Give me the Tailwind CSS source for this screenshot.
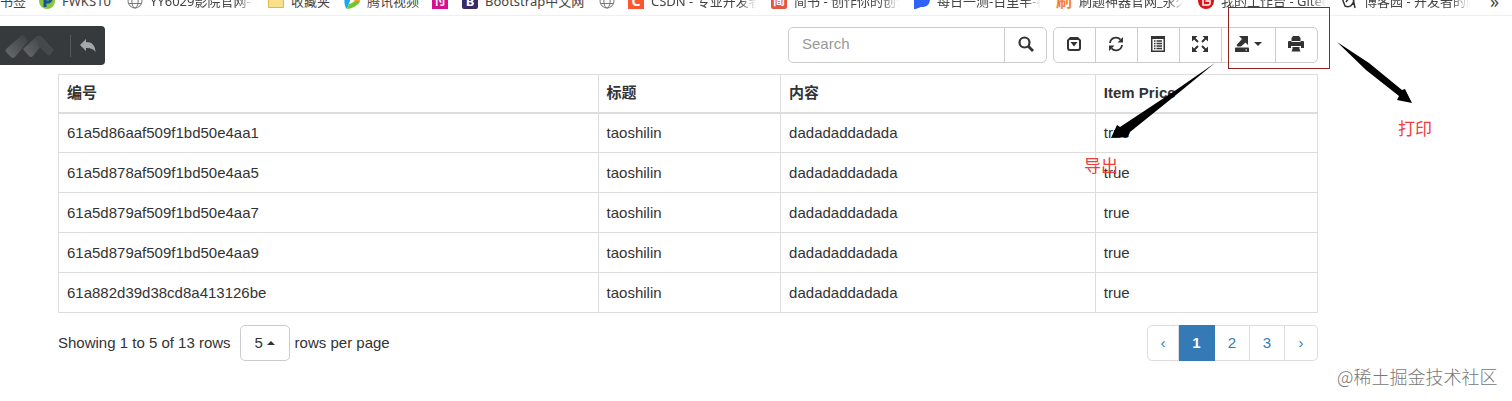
<!DOCTYPE html>
<html lang="zh-CN">
  <head>
    <meta charset="utf-8" />
    <title>Bootstrap Table</title>
    <script src="https://cdn.jsdelivr.net/npm/@tailwindcss/browser@4"></script>
  </head>
  <body class="relative min-h-screen bg-white font-['Liberation_Sans','Noto_Sans_CJK_SC',sans-serif] text-[15px] leading-5 text-[#333]">
    <!-- bookmarks bar -->
    <nav class="flex h-4 items-end overflow-hidden border-b border-[#f0f0f0] pb-1 font-['Noto_Sans','Noto_Sans_CJK_SC',sans-serif] text-[13px] text-[#444]">
      <ul class="flex h-5 w-full items-center gap-[15px] whitespace-nowrap">
        <li class="w-6 shrink-0">书签</li>
        <li>
          <a href="#" class="flex w-[73px] items-center gap-[7px]">
            <svg class="size-4 shrink-0" viewBox="0 0 16 16"><circle cx="8" cy="8" r="8" fill="#8cc63f" /><path d="M6 14V3h3a3 3 0 0 1 0 6H6" fill="none" stroke="#17559b" stroke-width="3" /></svg>
            FWKS10
          </a>
        </li>
        <li>
          <a href="#" class="flex items-center gap-[7px]">
            <svg class="size-4 shrink-0" viewBox="0 0 16 16" fill="none" stroke="#777"><circle cx="8" cy="8" r="7" /><ellipse cx="8" cy="8" rx="3.2" ry="7" /><path d="M1.5 5.5h13M1.5 10.5h13" /></svg>
            <span class="w-[103px] overflow-hidden mask-r-from-85%">YY6029影院官网-手机</span>
          </a>
        </li>
        <li>
          <a href="#" class="flex items-center gap-[7px]">
            <svg class="size-4 shrink-0" viewBox="0 0 16 16"><path d="M.5 2.5h6l1.500 2h7.500v10H.5z" fill="#fbe08c" stroke="#dfb64c" /></svg>
            <span class="w-[38px]">收藏夹</span>
          </a>
        </li>
        <li>
          <a href="#" class="flex items-center gap-[7px]">
            <svg class="size-4 shrink-0" viewBox="0 0 16 16"><path d="M1 2l6 3-4 11C0 14 0 6 1 2z" fill="#17a8f0" /><path d="M1 2C5 0 16 5 16 8L9 8z" fill="#ff9b20" /><path d="M16 8c0 3-8 8-13 8l2-5 5-3z" fill="#72c62b" /><path d="M6 5.500l5 2.500-5 3z" fill="#fff" /></svg>
            <span class="w-[50px]">腾讯视频</span>
          </a>
        </li>
        <li><a href="#" class="flex size-4 items-center justify-center bg-[#d6118c] text-xs font-bold text-white">付</a></li>
        <li class="-ml-px">
          <a href="#" class="flex items-center gap-[7px]">
            <span class="flex size-4 shrink-0 items-center justify-center rounded-xs bg-[#3c2a66] font-bold text-white">B</span>
            <span class="w-[99px]">Bootstrap中文网</span>
          </a>
        </li>
        <li>
          <a href="#" aria-label="link">
            <svg class="size-4" viewBox="0 0 16 16" fill="none" stroke="#777"><circle cx="8" cy="8" r="7" /><ellipse cx="8" cy="8" rx="3.2" ry="7" /><path d="M1.500 5.500h13M1.500 10.500h13" /></svg>
          </a>
        </li>
        <li class="-ml-0.5">
          <a href="#" class="flex items-center gap-[7px]">
            <span class="flex size-4 shrink-0 items-center justify-center bg-[#fc5531] text-sm font-bold text-white">C</span>
            <span class="w-[105px] overflow-hidden mask-r-from-85%">CSDN - 专业开发者</span>
          </a>
        </li>
        <li>
          <a href="#" class="flex items-center gap-[7px]">
            <span class="flex size-4 shrink-0 items-center justify-center rounded-xs bg-[#e4573f] text-xs font-bold text-white">简</span>
            <span class="w-[105px] overflow-hidden mask-r-from-85%">简书 - 创作你的创作</span>
          </a>
        </li>
        <li>
          <a href="#" class="flex items-center gap-[7px]">
            <svg class="size-4 shrink-0" viewBox="0 0 16 16"><path d="M0 16V6a6 6 0 0 1 6-6h4a6 6 0 0 1 6 6c0 5-3 8-8 8-3 0-4 2-8 2z" fill="#2f62f5" /></svg>
            <span class="w-[104px] overflow-hidden mask-r-from-85%">每日一测-百里半-在线</span>
          </a>
        </li>
        <li>
          <a href="#" class="flex items-center gap-[7px]">
            <span class="flex size-4 shrink-0 items-center justify-center text-base font-bold text-[#f58232]">刷</span>
            <span class="w-[104px] overflow-hidden mask-r-from-85%">刷题神器官网_永久</span>
          </a>
        </li>
        <li>
          <a href="#" class="flex items-center gap-[7px]">
            <svg class="size-4 shrink-0" viewBox="0 0 16 16"><circle cx="8" cy="8" r="8" fill="#d8141c" /><path d="M12 4H7a2 2 0 0 0-2 2v6h5a2 2 0 0 0 2-2V8H7.500" fill="none" stroke="#fff" stroke-width="1.500" /></svg>
            <span class="w-[105px] overflow-hidden mask-r-from-85%">我的工作台 - Gitee.com</span>
          </a>
        </li>
        <li>
          <a href="#" class="flex items-center gap-[7px]">
            <svg class="size-4 shrink-0" viewBox="0 0 16 16" fill="none" stroke="#333" stroke-width="1.500"><path d="M1 5l3 8c5 2 8-1 9-6M5 9c3-5 7-4 7-4l2 10" /></svg>
            <span class="w-[105px] overflow-hidden mask-r-from-85%">博客园 - 开发者的网</span>
          </a>
        </li>
        <li class="pl-1.5 text-lg">»</li>
      </ul>
    </nav>

    <!-- floating capture widget -->
    <div class="absolute top-[26px] left-0 flex h-[39px] w-[105px] items-center rounded-r-[4px] bg-[#363a3d]">
      <svg class="h-[26px] w-[54px] shrink-0" viewBox="0 0 54 26">
        <defs>
          <linearGradient id="fade" x1="0" y1="1" x2="1" y2="0"><stop stop-color="#686a6f" /><stop offset="1" stop-color="#3b3f42" /></linearGradient>
        </defs>
        <path d="M6 16L21 3q2-2 4 0l3 5-13 16q-2 2-4 0l-5-5q-1-1 0-3z" fill="url(#fade)" />
        <path d="M23 16L37 3l7 6-11 14q-2 2-4 0z" fill="url(#fade)" />
        <path d="M37 3h4l13 14-5 6-10-9z" fill="#46494c" />
      </svg>
      <button type="button" aria-label="back" class="ml-4 flex h-[22px] items-center border-l border-[#55595c] pl-2">
        <svg class="h-4 w-[18px]" viewBox="0 0 18 16" fill="#a5a8aa"><path d="M7 1v3c6 0 9 3 9.500 10-2-3-4.500-4-9.500-4v3L1 7z" /></svg>
      </button>
    </div>

    <main class="ml-[58px] w-5/6">
      <div class="flex justify-end gap-1.5 pt-[11px] pb-[11px]">
        <form class="flex h-9">
          <input type="text" aria-label="Search" placeholder="Search" class="w-[217px] rounded-l-[5px] border border-[#ccc] px-[13px] pb-0.5 placeholder:text-[#999]" />
          <button type="button" aria-label="search" class="-ml-px flex w-[43px] items-center justify-center rounded-r-[5px] border border-[#ccc] pb-0.5">
            <svg class="size-4" viewBox="0 0 16 16" fill="none" stroke="#333"><circle cx="6.500" cy="6.500" r="5" stroke-width="2.200" /><path d="M10 10l5 5" stroke-width="2.800" /></svg>
          </button>
        </form>
        <div class="flex h-9 divide-x divide-[#ccc] rounded-[5px] border border-[#ccc] [&>button]:pr-0.5 [&>button]:pb-0.5">
          <button type="button" aria-label="toggle pagination" class="flex w-[42px] items-center justify-center">
            <svg class="size-4" viewBox="0 0 16 16" fill="#333"><path fill-rule="evenodd" d="M4 1h8l3 3v8a3 3 0 0 1-3 3H4a3 3 0 0 1-3-3V4zM4 4q-1 0-1 1v7q0 1 1 1h8q1 0 1-1V5q0-1-1-1zM4.500 6h7L8 10.500z" /></svg>
          </button>
          <button type="button" aria-label="refresh" class="flex w-[42px] items-center justify-center">
            <svg class="size-4" viewBox="0 0 16 16"><path d="M2 7a6 6 0 0 1 10.500-3.300M14 9a6 6 0 0 1-10.500 3.300" fill="none" stroke="#333" stroke-width="1.800" /><path d="M15 1v5.500H9.500zM1 15V9.500h5.500z" fill="#333" /></svg>
          </button>
          <button type="button" aria-label="toggle view" class="flex w-[42px] items-center justify-center">
            <svg class="size-4" viewBox="0 0 16 16"><path fill="#333" fill-rule="evenodd" d="M1 0h14v16H1zM2.500 3v11.500h11V3z" /><path d="M4 5h1.500M4 7.500h1.500M4 10h1.500M4 12.500h1.500M6.500 5H12M6.500 7.500H12M6.500 10H12M6.500 12.500H12" stroke="#333" stroke-width="1.300" /></svg>
          </button>
          <button type="button" aria-label="fullscreen" class="flex w-[42px] items-center justify-center">
            <svg class="size-4" viewBox="0 0 16 16"><path d="M0 0h5.500L0 5.500zM16 0h-5.500L16 5.500zM0 16h5.500L0 10.500zM16 16h-5.500l5.500-5.500z" fill="#333" /><path d="M2 2l4 4M14 2l-4 4M2 14l4-4M14 14l-4-4" stroke="#333" stroke-width="2" /></svg>
          </button>
          <button type="button" aria-label="export" class="flex w-[54px] items-center justify-center gap-1">
            <svg class="size-4" viewBox="0 0 16 16" fill="#333"><path d="M5 0h9v9l-2.500-2.500L7 10.500H3.500L2.500 9 8 3z" /><path fill-rule="evenodd" d="M1.500 11.500h13l.5.5v4H1v-4zM11.500 13.500v1H13v-1z" /></svg>
            <svg class="h-1 w-2" viewBox="0 0 8 4" fill="#333"><path d="M0 0h8L4 4z" /></svg>
          </button>
          <button type="button" aria-label="print" class="flex w-[41px] items-center justify-center">
            <svg class="size-4" viewBox="0 0 16 16" fill="#333"><path d="M5 0h6l1.500 2v3h-9V2zM3.500 6h9V5H15q1 0 1 1v6h-3v-2H3v2H0V6q0-1 1-1h2.500zM4.500 11h7v2l1 2.500h-9l1-2.500z" /></svg>
          </button>
        </div>
      </div>

      <table class="w-full table-fixed border-collapse border border-[#ddd] text-left">
        <thead>
          <tr class="h-[38px] border-b-2 border-[#ddd] [&>th]:border-x [&>th]:border-[#ddd] [&>th]:px-2">
            <th class="w-3/7">编号</th>
            <th class="w-[14.5%]">标题</th>
            <th class="w-1/4">内容</th>
            <th>Item Price</th>
          </tr>
        </thead>
        <tbody class="[&_td]:h-10 [&_td]:border [&_td]:border-[#ddd] [&_td]:px-2">
          <tr><td>61a5d86aaf509f1bd50e4aa1</td><td>taoshilin</td><td>dadadaddadada</td><td>true</td></tr>
          <tr><td>61a5d878af509f1bd50e4aa5</td><td>taoshilin</td><td>dadadaddadada</td><td>true</td></tr>
          <tr><td>61a5d879af509f1bd50e4aa7</td><td>taoshilin</td><td>dadadaddadada</td><td>true</td></tr>
          <tr><td>61a5d879af509f1bd50e4aa9</td><td>taoshilin</td><td>dadadaddadada</td><td>true</td></tr>
          <tr><td>61a882d39d38cd8a413126be</td><td>taoshilin</td><td>dadadaddadada</td><td>true</td></tr>
        </tbody>
      </table>

      <div class="flex items-center justify-between pt-3">
        <div class="flex items-center">
          <span>Showing 1 to 5 of 13 rows</span>
          <button type="button" class="mr-[5px] ml-[9px] flex h-9 w-[50px] items-center justify-center gap-1 rounded-[5px] border border-[#ccc]">
            5
            <svg class="h-1 w-2" viewBox="0 0 8 4" fill="#333"><path d="M0 4h8L4 0z" /></svg>
          </button>
          <span>rows per page</span>
        </div>
        <ul class="flex h-9 text-[#337ab7] [&_a]:flex [&_a]:h-full [&_a]:items-center [&_a]:justify-center [&_a]:border-y [&_a]:border-r [&_a]:border-[#ddd]">
          <li><a href="#" class="w-8 rounded-l-[5px] border-l">‹</a></li>
          <li><a href="#" class="w-9 border-[#337ab7]! bg-[#337ab7] font-bold text-white">1</a></li>
          <li><a href="#" class="w-[35px]">2</a></li>
          <li><a href="#" class="w-[35px]">3</a></li>
          <li><a href="#" class="w-[33px] rounded-r-[5px]">›</a></li>
        </ul>
      </div>
    </main>

    <!-- notes drawn over the page -->
    <div class="pointer-events-none absolute top-[7px] left-[1228px] h-[62px] w-[102px] border border-[#8f2424]"></div>
    <svg class="pointer-events-none absolute top-[62px] left-[1110px] h-[78px] w-[106px]" viewBox="0 0 106 78"><path d="M105 1L66 33 20 70l-2 5-17 1 6-13 3 2 56-37z" /></svg>
    <svg class="pointer-events-none absolute top-[42px] left-[1336px] h-[62px] w-[77px]" viewBox="0 0 77 62"><path d="M1 0l32 21 33 27 3-1 7 14-15-3 2-4-33-26z" /></svg>
    <span class="absolute top-[155px] left-[1084px] font-['Noto_Sans_CJK_SC',sans-serif] text-[17px] text-[#f03c3c]">导出</span>
    <span class="absolute top-[118px] left-[1398px] font-['Noto_Sans_CJK_SC',sans-serif] text-[17px] text-[#f03c3c]">打印</span>
    <span class="absolute top-[366px] left-[1337px] font-['Noto_Sans_CJK_SC',sans-serif] text-lg leading-5 font-light whitespace-nowrap text-[#777]">@稀土掘金技术社区</span>
  </body>
</html>
